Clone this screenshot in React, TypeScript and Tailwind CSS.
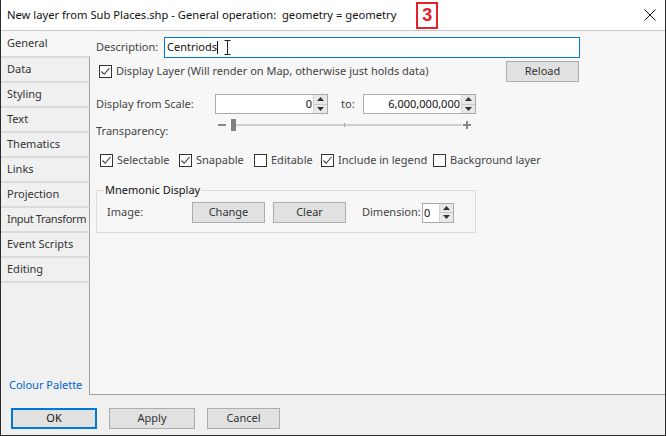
import React from 'react';

const font = { fontFamily: '"Noto Sans", "Liberation Sans", sans-serif' };

const tabs = ['Data', 'Styling', 'Text', 'Thematics', 'Links', 'Projection', 'Input Transform', 'Event Scripts', 'Editing'];

function Check({ checked }: { checked?: boolean }) {
  return (
    <span className="w-[13px] h-[13px] border border-[#333] bg-white flex items-center justify-center shrink-0">
      {checked && (
        <svg width="11" height="11" viewBox="0 0 11 11">
          <path d="M1.5 5.5 L4.2 8.3 L9.5 2" fill="none" stroke="#333" strokeWidth="1.1" />
        </svg>
      )}
    </span>
  );
}

function CheckItem({ label, checked, className }: { label: string; checked?: boolean; className: string }) {
  return (
    <div className={`flex items-center gap-[4px] ${className}`}>
      <Check checked={checked} />
      <span>{label}</span>
    </div>
  );
}

function Spin({ value, className, left }: { value: string; className: string; left?: boolean }) {
  return (
    <div className={`h-[20px] bg-white border border-[#a9a9a9] flex items-stretch ${className}`}>
      <span className={`flex-1 leading-[18px] text-[#111] ${left ? 'pl-[1px]' : 'text-right pr-[1px]'}`}>{value}</span>
      <div className="w-[14px] flex flex-col bg-[#e8e8e8] border-l border-[#d4d4d4]">
        <span className="flex-1 flex items-center justify-center border-b border-[#c8c8c8]">
          <svg width="7" height="4" viewBox="0 0 7 4"><path d="M0 4 L3.5 0 L7 4 Z" fill="#333" /></svg>
        </span>
        <span className="flex-1 flex items-center justify-center">
          <svg width="7" height="4" viewBox="0 0 7 4"><path d="M0 0 L3.5 4 L7 0 Z" fill="#333" /></svg>
        </span>
      </div>
    </div>
  );
}

function Btn({ label, className }: { label: string; className: string }) {
  return (
    <div className={`bg-[#e1e1e1] border border-[#adadad] flex items-center justify-center text-[#333] ${className}`}>
      {label}
    </div>
  );
}

export default function App() {
  return (
    <div style={font} className="w-[666px] h-[436px] flex flex-col bg-[#f0f0f0] border-x border-b border-[#2b2b2b] text-[11px] text-[#444] overflow-hidden">
      {/* title bar */}
      <div className="h-[31px] shrink-0 bg-white border-b border-[#c8c8c8] flex items-center pl-[6px] pr-[8px]">
        <span className="text-[#111] text-[11.2px] whitespace-pre">New layer from Sub Places.shp - General operation:  geometry = geometry</span>
        <span className="ml-[20px] w-[22px] h-[27px] border-2 border-[#e8202a] flex items-center justify-center text-[#e8202a] font-bold text-[18px] leading-none" style={{ fontFamily: '"Liberation Sans", Arial, sans-serif' }}>3</span>
        <span className="ml-auto mr-[1px]">
          <svg width="12" height="12" viewBox="0 0 12 12">
            <path d="M0.5 0.5 L11.5 11.5 M11.5 0.5 L0.5 11.5" stroke="#111" strokeWidth="1" />
          </svg>
        </span>
      </div>

      <div className="flex flex-1 min-h-0">
        {/* tabs */}
        <div className="w-[89px] shrink-0 flex flex-col">
          <div className="h-[25px] bg-[#f7f7f7] pl-[6px] flex items-center text-[#333]">General</div>
          {tabs.map(t => (
            <div key={t} className={`h-[25px] border-t-2 border-[#dadada] border-r border-r-[#a0a0a0] pl-[6px] flex items-center text-[#333] whitespace-nowrap overflow-hidden ${t === 'Input Transform' ? 'tracking-[-0.35px]' : ''}`}>
              {t}
            </div>
          ))}
          <div className="flex-1 border-t-2 border-[#dadada] border-r border-r-[#a0a0a0] flex items-end pl-[8px] pb-[2px]">
            <span className="text-[#0066cc]">Colour Palette</span>
          </div>
        </div>

        {/* content */}
        <div className="flex-1 bg-[#f7f7f7] border-b border-[#a0a0a0] pl-[6px] pt-[6px] flex flex-col">
          <div className="flex items-center h-[21px]">
            <span className="w-[68px]">Description:</span>
            <div className="w-[416px] h-[21px] border border-[#0078d7] bg-white flex items-center pl-[2px] relative">
              <span className="text-[#111]">Centriods</span>
              <span className="w-px h-[13px] bg-[#111]" />
              <svg className="absolute left-[59px] top-[2px]" width="7" height="15" viewBox="0 0 7 15">
                <path d="M0.5 0.5 H6.5 M3.5 0.5 V14.5 M0.5 14.5 H6.5" stroke="#222" strokeWidth="1" fill="none" />
              </svg>
            </div>
          </div>

          <div className="flex items-center h-[21px] mt-[3px]">
            <span className="ml-[3px]"><Check checked /></span>
            <span className="ml-[4px]">Display Layer (Will render on Map, otherwise just holds data)</span>
            <Btn label="Reload" className="ml-auto mr-[86px] w-[73px] h-[21px]" />
          </div>

          <div className="flex items-center h-[20px] mt-[12px]">
            <span className="w-[119px]">Display from Scale:</span>
            <Spin value="0" className="w-[113px]" />
            <span className="ml-[13px] w-[22px]">to:</span>
            <Spin value="6,000,000,000" className="w-[113px]" />
          </div>

          <div className="flex items-start h-[20px] mt-[1px]">
            <span className="w-[122px] mt-[8px]">Transparency:</span>
            <svg className="mt-[4px]" width="260" height="14" viewBox="0 0 260 14">
              <rect x="0" y="5" width="8" height="2" fill="#888" />
              <rect x="13" y="0" width="5" height="12" fill="#808080" />
              <rect x="18" y="5.5" width="226" height="1" fill="#a6a6a6" />
              <rect x="126" y="4" width="1" height="4" fill="#a6a6a6" />
              <rect x="245" y="5" width="8" height="2" fill="#888" />
              <rect x="248" y="2" width="2" height="8" fill="#888" />
            </svg>
          </div>

          <div className="flex items-center h-[16px] mt-[17px] ml-[4px]">
            <CheckItem label="Selectable" checked className="w-[79px]" />
            <CheckItem label="Snapable" checked className="w-[75px]" />
            <CheckItem label="Editable" className="w-[67px]" />
            <CheckItem label="Include in legend" checked className="w-[112px]" />
            <CheckItem label="Background layer" className="" />
          </div>

          <div className="relative mt-[22px] w-[380px] h-[43px] border border-[#dcdcdc] flex items-center pl-[10px] pt-[2px]">
            <span className="absolute left-[7px] -top-[9px] bg-[#f7f7f7] px-[1px] text-[#111] leading-[16px]">Mnemonic Display</span>
            <span className="w-[85px]">Image:</span>
            <Btn label="Change" className="w-[73px] h-[21px]" />
            <Btn label="Clear" className="ml-[8px] w-[73px] h-[21px]" />
            <span className="ml-[16px] w-[60px]">Dimension:</span>
            <Spin value="0" left className="w-[32px]" />
          </div>
        </div>
      </div>

      {/* bottom buttons */}
      <div className="h-[40px] shrink-0 flex items-start pl-[10px] pt-[13px]">
        <div className="w-[86px] h-[21px] border-2 border-[#0078d7] bg-[#e1e1e1] flex items-center justify-center text-[#111]">OK</div>
        <Btn label="Apply" className="ml-[12px] w-[86px] h-[21px] text-[#111]" />
        <Btn label="Cancel" className="ml-[12px] w-[73px] h-[21px] text-[#111]" />
      </div>
    </div>
  );
}
